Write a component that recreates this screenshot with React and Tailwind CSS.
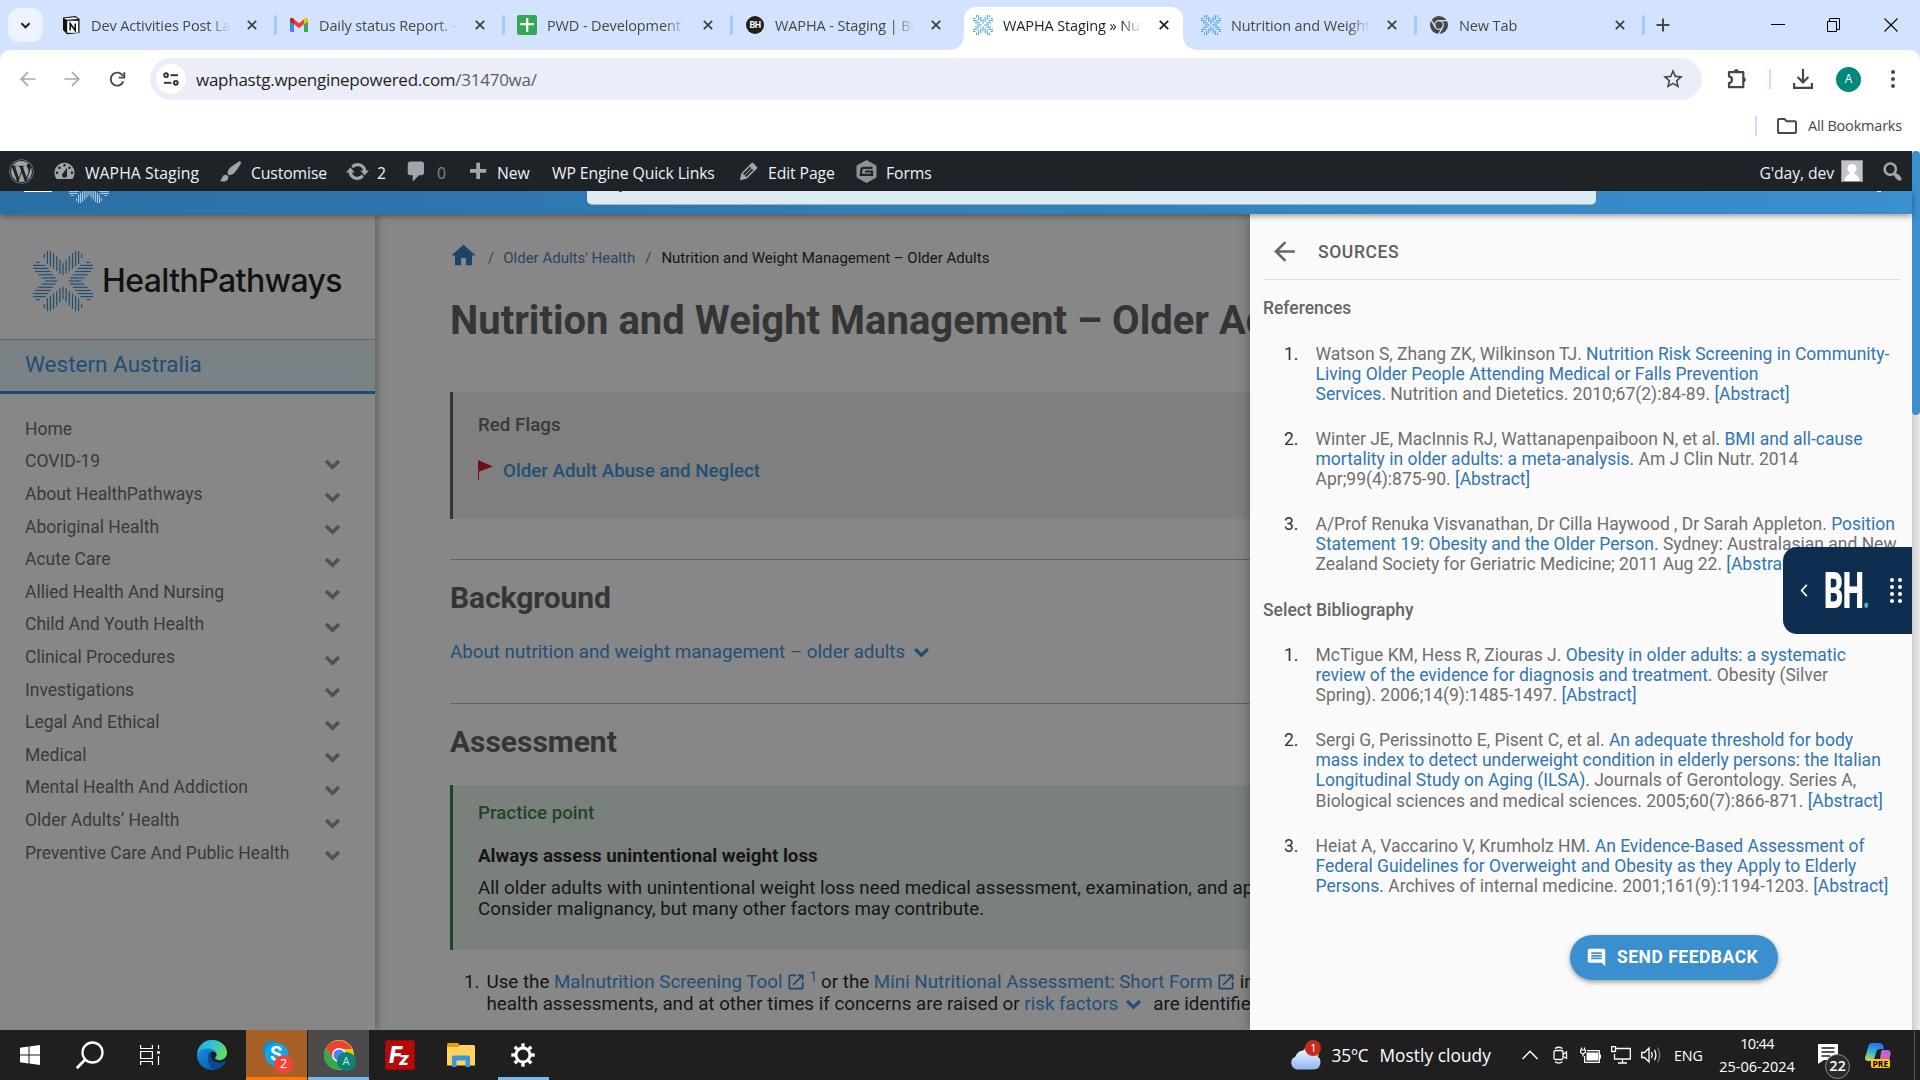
import React from "react";
import { MdHome, MdOpenInNew, MdComment, MdArrowBack, MdStarBorder } from "react-icons/md";
import { FaWordpress } from "react-icons/fa";

const UI = "font-['Open_Sans','Noto_Sans',sans-serif]";

/* ---------- shared icons ---------- */

const BURST_V = [
  [0, 12, 24.3],
  [3.1, 8.7, 22.7],
  [6.3, 5.3, 20],
  [9.5, 2, 17.7],
  [12.6, 0, 15.3],
  [15.6, 0, 12.7],
  [18.6, 3, 6.7],
];

const BURST_FLAT = [
  [0, 12, 26],
  [6.5, 6, 20],
  [13, 0, 14],
  [19.500, 0, 7],
];

function Burst({ className, sw = 1.3, flat = false }) {
  const rows = flat ? BURST_FLAT : BURST_V;
  return (
    <svg viewBox="0 0 60 60" className={className} fill="none" stroke="currentColor" strokeWidth={sw}>
      {[0, 90, 180, 270].map((a) => (
        <g key={a} transform={`rotate(${a} 30 30)`}>
          {rows.map(([dx, a1, b1]) => (
            <g key={dx}>
              <path d={`M${30 - dx} ${a1}V${b1}`} />
              {dx > 0 && <path d={`M${30 + dx} ${a1}V${b1}`} />}
            </g>
          ))}
        </g>
      ))}
    </svg>
  );
}

function Chevron({ className, sw = 4 }) {
  return (
    <svg viewBox="0 0 18 12" className={className} fill="none" stroke="currentColor" strokeWidth={sw}>
      <path d="M2 2.2 9 9 16 2.2" />
    </svg>
  );
}

function Notion() {
  return (
    <svg viewBox="0 0 20 20" className="size-5">
      <path d="M2 2.5 14.5 1 18.5 4V18L6 19.3 2 15Z" fill="#111" />
      <path d="M3 3.3 14.2 2.2 17 4 5.8 4.8Z" fill="#fff" />
      <rect x="6.2" y="5.8" width="11" height="12" fill="#fff" />
      <path d="M9.200 15.500V8.500L14.200 15.500V8.500" stroke="#111" strokeWidth="1.600" fill="none" />
    </svg>
  );
}

function Gmail() {
  return (
    <svg viewBox="0 0 20 20" className="size-5">
      <path d="M1 4.5 5 7.5V17H2.2A1.2 1.2 0 0 1 1 15.800Z" fill="#4285f4" />
      <path d="M15 7.500 19 4.500V15.800A1.200 1.200 0 0 1 17.800 17H15Z" fill="#34a853" />
      <path d="M5 4.300 10 8.200 15 4.300V9.300L10 13.200 5 9.300Z" fill="#ea4335" />
      <path d="M1 4.800C1 3 3 2.200 4.300 3.500L5 4.100V9.300L1 6.400Z" fill="#c5221f" />
      <path d="M19 4.800C19 3 17 2.200 15.700 3.500L15 4.100V9.300L19 6.400Z" fill="#fbbc04" />
    </svg>
  );
}

function Sheets() {
  return (
    <svg viewBox="0 0 20 20" className="size-5">
      <rect width="20" height="20" rx="2" fill="#34a853" />
      <path d="M9 3H11.300V8H17V10.300H11.300V17H9V10.300H3V8H9Z" fill="#fff" />
    </svg>
  );
}

function BhBadge() {
  return (
    <span className="flex size-[18px] items-center justify-center rounded-full bg-[#1f1f1f] font-['Roboto',sans-serif] text-[9px] font-bold leading-none tracking-[-0.5px] text-white">
      BH
    </span>
  );
}

function ChromeMono() {
  return (
    <svg viewBox="0 0 20 20" className="size-5">
      <circle cx="10" cy="10" r="9" fill="#474747" />
      <g stroke="#d3e3fd" strokeWidth="1.300" fill="none">
        <circle cx="10" cy="10" r="4.300" />
        <path d="M10 5.700H18.500M6.300 12.200 2.200 5.200M13.700 12.200 9.500 19.300" />
      </g>
    </svg>
  );
}

/* ---------- browser tabs ---------- */

const TABS = [
  { icon: <Notion />, title: "Dev Activities Post Launch", sep: true },
  { icon: <Gmail />, title: "Daily status Report. - dev", sep: true },
  { icon: <Sheets />, title: "PWD - Development Tasks", sep: true },
  { icon: <BhBadge />, title: "WAPHA - Staging | Bug Herd" },
  { icon: <Burst className="size-5 text-[#4a9fd6]" sw={3.2} flat />, title: "WAPHA Staging » Nutrition", active: true },
  { icon: <Burst className="size-5 text-[#4a9fd6]" sw={3.2} flat />, title: "Nutrition and Weight Man", sep: true },
  { icon: <ChromeMono />, title: "New Tab", sep: true },
];

function Cross({ className }) {
  return (
    <svg viewBox="0 0 10 10" className={className} stroke="currentColor" strokeWidth="1.700" fill="none">
      <path d="M0.800 0.800 9.200 9.200M9.200 0.800 0.800 9.200" />
    </svg>
  );
}

function Tab({ icon, title, active, sep }) {
  return (
    <div className="relative flex h-[50px] w-[228px] shrink-0 items-center pl-[13px]">
      {active && (
        <>
          <div className="absolute bottom-0 left-[4px] top-[7px] w-[219px] rounded-t-[12px] bg-white" />
          <div className="absolute bottom-0 left-[-10px] h-[14px] w-[14px] bg-[radial-gradient(circle_at_0_0,transparent_13.500px,#fff_14px)]" />
          <div className="absolute bottom-0 left-[223px] h-[14px] w-[14px] bg-[radial-gradient(circle_at_100%_0,transparent_13.500px,#fff_14px)]" />
        </>
      )}
      <div className="relative flex w-5 shrink-0 justify-center">{icon}</div>
      <div
        className={`relative ml-[10px] w-[139px] overflow-hidden whitespace-nowrap pt-[2px] text-[14.500px] leading-[24px] tracking-[-0.120px] [mask-image:linear-gradient(to_right,#000_118px,transparent_139px)] ${active ? "text-[#1f1f1f]" : "text-[#474747]"}`}
      >
        {title}
      </div>
      <Cross className={`relative ml-[17px] size-[10px] ${active ? "text-[#1f1f1f]" : "text-[#3c3c3c]"}`} />
      {sep && <div className="absolute right-[-1px] top-[15px] h-5 w-[3px] rounded bg-[#a8c7fa]" />}
    </div>
  );
}

function TabStrip() {
  return (
    <div className="flex h-[50px] items-center bg-[#d3e3fd]">
      <div className="ml-2 flex h-[34px] w-[35px] items-center justify-center rounded-[11px] bg-[#ecf3fe] text-[#1f1f1f]">
        <Chevron className="h-[7px] w-[11px]" sw={3.400} />
      </div>
      <div className="ml-[5px] flex">
        {TABS.map((t, i) => (
          <Tab key={i} {...t} />
        ))}
      </div>
      <svg viewBox="0 0 14 14" className="ml-[12px] size-[14px] text-[#474747]" stroke="currentColor" strokeWidth="2">
        <path d="M7 0.500V13.500M0.500 7H13.500" />
      </svg>
      <div className="ml-auto flex items-center text-black">
        <svg viewBox="0 0 14 14" className="size-[14px]" stroke="currentColor">
          <path d="M0 6.500H14" />
        </svg>
        <svg viewBox="0 0 14 14" className="ml-[41px] size-[14px]" stroke="currentColor" fill="none">
          <path d="M1.500 3.500H10.500V13.500H1.500ZM3.500 3V0.500H13.500V11.500H11" />
        </svg>
        <svg viewBox="0 0 14 14" className="ml-[44px] mr-[22px] size-[14px]" stroke="currentColor" strokeWidth="1.100">
          <path d="M0.500 0.500 13.500 13.500M13.500 0.500 0.500 13.500" />
        </svg>
      </div>
    </div>
  );
}

/* ---------- browser toolbar ---------- */

function NavArrow({ className }) {
  return (
    <svg viewBox="0 0 16 16" className={className} fill="none" stroke="currentColor" strokeWidth="1.700">
      <path d="M15.500 8H1.500M8 1.200 1.300 8 8 14.800" />
    </svg>
  );
}

function Toolbar() {
  return (
    <div className="bg-[#d3e3fd]">
      <div className="h-[101px] rounded-t-[10px] bg-white">
        <div className="flex h-[58px] items-center text-[#474747]">
          <NavArrow className="ml-5 size-4 text-[#a9a9a9]" />
          <NavArrow className="ml-[28px] size-4 rotate-180 text-[#a9a9a9]" />
          <svg viewBox="0 0 18 18" className="ml-[29px] size-[17px]" fill="none" stroke="currentColor" strokeWidth="2">
            <path d="M15.200 11A6.900 6.900 0 1 1 14.800 5.300" />
            <path d="M16.200 1.200V7H10.200" />
          </svg>
          <div className="ml-[24px] flex h-[42px] w-[1552px] items-center rounded-full bg-[#ebeef8]">
            <div className="ml-[6px] flex size-[30px] items-center justify-center rounded-full bg-white">
              <svg viewBox="0 0 16 14" className="h-[14px] w-4" fill="none" stroke="#303030" strokeWidth="1.900">
                <circle cx="3" cy="3.200" r="1.900" />
                <path d="M7.500 3.200H15" />
                <circle cx="12.800" cy="10.800" r="1.900" />
                <path d="M1 10.800H8.500" />
              </svg>
            </div>
            <div className="ml-[10px] pt-px text-[17px] leading-[24px] tracking-[-0.260px] text-[#1f1f1f]">
              waphastg.wpenginepowered.com<span className="text-[#5a5d63]">/31470wa/</span>
            </div>
            <MdStarBorder className="ml-auto mr-[17px] size-6" />
          </div>
          <svg viewBox="0 0 22 22" className="ml-[24px] size-[22px]" fill="none" stroke="currentColor" strokeWidth="2.200" strokeLinejoin="round">
            <path d="M3 4.200H17.300V19.200H3V15C7 14.600 7 8.800 3 8.400Z" />
            <path d="M8.300 3.500A2 2 0 0 1 12.300 3.500ZM18 9.800A2 2 0 0 1 18 13.600Z" fill="currentColor" strokeWidth="1" />
          </svg>
          <div className="ml-[21px] h-[20px] w-[2px] bg-[#c9dcfb]" />
          <svg viewBox="0 0 20 20" className="ml-[22px] size-5" fill="none" stroke="currentColor" strokeWidth="2.200">
            <path d="M10 0V13M4.600 8 10 13.400 15.400 8M1.100 14V18.800H18.900V14" />
          </svg>
          <div className="ml-[23px] flex size-[25px] items-center justify-center rounded-full bg-[#00897b] text-[12px] text-white">A</div>
          <svg viewBox="0 0 4 18" className="ml-[30px] h-[18px] w-1" fill="currentColor">
            <circle cx="2" cy="2" r="2" />
            <circle cx="2" cy="9" r="2" />
            <circle cx="2" cy="16" r="2" />
          </svg>
        </div>
        <div className="flex h-[35px] items-center justify-end pr-[18px] text-[#474747]">
          <div className="h-5 w-[2px] bg-[#c9dcfb]" />
          <svg viewBox="0 0 20 16" className="ml-[20px] h-4 w-5" fill="none" stroke="currentColor" strokeWidth="1.900" strokeLinejoin="round">
            <path d="M1 1.800Q1 1 2 1H7.500L9.500 3.200H18Q19 3.200 19 4.200V14Q19 15 18 15H2Q1 15 1 14Z" />
          </svg>
          <div className="ml-[11px] text-[14.500px] leading-5 tracking-[-0.200px]">All Bookmarks</div>
        </div>
      </div>
    </div>
  );
}

/* ---------- WordPress admin bar ---------- */

const DASH = {
  dashboard:
    "M3.76 16h12.48c1.1-1.37 1.76-3.11 1.76-5 0-4.42-3.58-8-8-8s-8 3.58-8 8c0 1.89.66 3.63 1.76 5zM10 4c.55 0 1 .45 1 1s-.45 1-1 1-1-.45-1-1 .45-1 1-1zM6 6c.55 0 1 .45 1 1s-.45 1-1 1-1-.45-1-1 .45-1 1-1zm8 0c.55 0 1 .45 1 1s-.45 1-1 1-1-.45-1-1 .45-1 1-1zm-5.37 5.55L12 7v6c0 1.1-.9 2-2 2s-2-.9-2-2c0-.57.24-1.08.63-1.45zM4 10c.55 0 1 .45 1 1s-.45 1-1 1-1-.45-1-1 .45-1 1-1zm12 0c.55 0 1 .45 1 1s-.45 1-1 1-1-.45-1-1 .45-1 1-1z",
  brush:
    "M18.33 3.57s.27-.8-.31-1.36c-.53-.52-1.22-.24-1.22-.24-.61.3-5.76 3.47-7.67 5.57-.86.96-2.06 3.79-1.09 4.82.92.98 3.96-.17 4.79-1 2.06-2.06 5.21-7.17 5.5-7.79zM1.4 17.65c2.37-1.56 1.46-3.41 3.23-4.64.93-.65 2.22-.62 3.08.29.63.67.8 2.57-.16 3.46-1.57 1.45-4 1.55-6.15.89z",
  update:
    "M10.2 3.28c3.53 0 6.43 2.61 6.92 6h2.08l-3.5 4-3.5-4h2.32c-.45-1.97-2.21-3.45-4.32-3.45-1.45 0-2.73.71-3.54 1.78L4.95 5.66C6.23 4.2 8.11 3.28 10.2 3.28zm-.4 13.44c-3.52 0-6.43-2.61-6.92-6H.8l3.5-4c1.17 1.33 2.33 2.67 3.5 4H5.48c.45 1.97 2.21 3.45 4.32 3.45 1.45 0 2.73-.71 3.54-1.78l1.71 1.95c-1.28 1.46-3.15 2.38-5.25 2.38z",
  comment: "M5 2h9c1.1 0 2 .9 2 2v7c0 1.1-.9 2-2 2h-2l-5 5v-5H5c-1.1 0-2-.9-2-2V4c0-1.1.9-2 2-2z",
  plus: "M17 8v3h-5v5H9v-5H4V8h5V3h3v5h5z",
  edit:
    "M13.89 3.39l2.71 2.72c.46.46.42 1.24.03 1.64l-8.01 8.02-5.56 1.16 1.16-5.58s7.6-7.63 7.99-8.03c.39-.39 1.22-.39 1.68.07zm-2.73 2.79l-5.59 5.61 1.11 1.11 5.54-5.65zm-2.97 8.23l5.58-5.6-1.07-1.08-5.59 5.6z",
  search:
    "M12.14 4.18c1.87 1.87 2.11 4.75.72 6.89.12.1.22.21.36.31.2.16.47.36.81.59.34.24.56.39.66.47.42.31.73.57.94.78.32.32.6.65.84 1 .25.35.44.69.59 1.04.14.35.21.68.18 1-.02.32-.14.59-.36.81s-.49.34-.81.36c-.31.02-.65-.04-.99-.19-.35-.14-.7-.34-1.04-.59-.35-.24-.68-.52-1-.84-.21-.21-.47-.52-.77-.93-.1-.13-.25-.35-.47-.66-.22-.32-.4-.57-.56-.78-.16-.2-.29-.35-.44-.5-2.07 1.09-4.69.76-6.44-.98-2.14-2.15-2.14-5.64 0-7.78 2.15-2.15 5.63-2.15 7.78 0zm-1.41 6.36c1.36-1.37 1.36-3.58 0-4.95-1.37-1.37-3.59-1.37-4.95 0-1.37 1.37-1.37 3.58 0 4.95 1.36 1.37 3.58 1.37 4.95 0z",
};

function Dashicon({ name }) {
  return (
    <svg viewBox="0 0 20 20" className="size-[25px] shrink-0" fill="#a0a5aa" fillRule="evenodd">
      <path d={DASH[name]} />
    </svg>
  );
}

function BarItem({ icon, w, gap = "gap-2", children, dim }) {
  return (
    <div className={`flex shrink-0 items-center whitespace-nowrap ${w} ${gap}`}>
      {icon}
      <span className={`pt-[3px] ${dim ? "text-[#83878b]" : ""}`}>{children}</span>
    </div>
  );
}

function AdminBar() {
  return (
    <div className="flex h-10 items-center bg-[#1d2327] text-[15.750px] leading-[24px] tracking-[-0.110px] text-[#f0f0f1]">
      <div className="flex w-[52px] shrink-0 items-center pl-[9px]">
        <FaWordpress className="size-[25px] text-[#a0a5aa]" />
      </div>
      <BarItem w="w-[166px] tracking-[0.050px]" icon={<Dashicon name="dashboard" />}>WAPHA Staging</BarItem>
      <BarItem w="w-[127px]" icon={<Dashicon name="brush" />}>Customise</BarItem>
      <BarItem w="w-[59px]" gap="gap-[7px]" icon={<Dashicon name="update" />}>2</BarItem>
      <BarItem w="w-[61px]" icon={<Dashicon name="comment" />} dim>0</BarItem>
      <BarItem w="w-[87px]" gap="gap-[7px]" icon={<Dashicon name="plus" />}>New</BarItem>
      <BarItem w="w-[184px]">WP Engine Quick Links</BarItem>
      <BarItem w="w-[118px]" gap="gap-[7px]" icon={<Dashicon name="edit" />}>Edit Page</BarItem>
      <BarItem
        w="w-[90px]"
        gap="gap-[7px]"
        icon={
          <svg viewBox="0 0 25 25" className="size-[25px]">
            <path d="M12.500 1 21.500 6Q22.500 6.500 22.500 8V17Q22.500 18.500 21.500 19L12.500 24 3.500 19Q2.500 18.500 2.500 17V8Q2.500 6.500 3.500 6Z" fill="#8f9194" />
            <path d="M18.500 8.800H9.500Q7.600 8.800 7.300 10.800L6.800 15.800H18V12.500H11" fill="none" stroke="#1d2327" strokeWidth="2.200" />
          </svg>
        }
      >
        Forms
      </BarItem>
      <div className="ml-auto flex items-center pr-[7px]">
        <span className="pt-[3px]">G'day, dev</span>
        <svg viewBox="0 0 22 22" className="ml-[7px] size-[22px]">
          <rect width="22" height="22" fill="#8c8f94" />
          <rect x="1" y="1" width="20" height="20" fill="#c3c4c7" />
          <circle cx="11" cy="8.500" r="4.500" fill="#fff" />
          <path d="M3.500 21Q4 15.500 8 14.500L9 12H13L14 14.500Q18 15.500 18.500 21Z" fill="#fff" />
        </svg>
        <span className="ml-[17px]"><Dashicon name="search" /></span>
      </div>
    </div>
  );
}

/* ---------- site header remnant ---------- */

function SiteHeader() {
  return (
    <div className="relative z-10 flex h-[23px] items-start bg-linear-to-r from-[#2a6fa4] to-[#3a8fce] shadow-[0_2px_6px_rgba(0,0,0,0.400)]">
      <div className="ml-6 h-px w-7 bg-white" />
      <div className="ml-[17px] h-3 w-10 overflow-hidden">
        <Burst className="mt-[-28px] size-10 text-[#b9d6ec]" sw={1.500} />
      </div>
      <div className="ml-[478px] h-[14px] w-[1009px] rounded-b-[5px] border-b border-[#9db4c4] bg-[#dfebf4] pl-[32px]">
        <div className="h-px w-[3px] bg-[#555]" />
      </div>
      <div className="ml-[281px] h-px w-1 bg-white" />
    </div>
  );
}

/* ---------- sidebar ---------- */

const MENU = [
  "Home",
  "COVID-19",
  "About HealthPathways",
  "Aboriginal Health",
  "Acute Care",
  "Allied Health And Nursing",
  "Child And Youth Health",
  "Clinical Procedures",
  "Investigations",
  "Legal And Ethical",
  "Medical",
  "Mental Health And Addiction",
  "Older Adults’ Health",
  "Preventive Care And Public Health",
];

function Sidebar() {
  return (
    <div className="relative w-[375px] shrink-0 bg-[#878787] shadow-[2px_0_8px_rgba(0,0,0,0.300)]">
      <div className="flex h-[126px] items-start border-b border-[#626969]">
        <Burst className="ml-[33px] mt-[37px] size-[60px] text-[#1f4f75]" sw={1.200} />
        <div className="ml-[9px] mt-[47px] font-['Inter',sans-serif] text-[32px] font-medium leading-[40px] tracking-[-0.600px] text-[#121212]">HealthPathways</div>
      </div>
      <div className="flex h-[54px] items-center border-b-[3px] border-[#1f4c70] bg-[#7a8285] pb-[2px] pl-[25px] text-[22.500px] text-[#214e74]">Western Australia</div>
      <div className="mt-[18.700px]">
        {MENU.map((m, i) => (
          <div key={m} className="flex h-[32.600px] items-center justify-between pl-[25px] pr-[34px] text-[17.500px] text-[#3a3a3a]">
            {m}
            {i > 0 && <Chevron className="mt-[6px] h-[11px] w-[17px] text-[#515151]" />}
          </div>
        ))}
      </div>
    </div>
  );
}

/* ---------- article ---------- */

const dimLink = "text-[#234f75]";

function Article() {
  return (
    <div className="min-w-0 flex-1 overflow-hidden whitespace-nowrap pl-[75px] text-[18.750px] text-[#151515]">
      <div className="mt-8 flex h-6 items-center text-[15px]">
        <MdHome className="-ml-[1px] mt-[-6px] size-[29px] text-[#1a4468]" />
        <span className="ml-[10px] text-[#444]">/</span>
        <span className="ml-[9px] text-[#27455f]">Older Adults' Health</span>
        <span className="ml-[10px] text-[#444]">/</span>
        <span className="ml-[10px]">Nutrition and Weight Management – Older Adults</span>
      </div>
      <h1 className="mt-[26px] h-[49px] text-[40px] font-bold leading-[50px] text-[#353535]">Nutrition and Weight Management – Older Adults</h1>
      <div className="mt-[47px] h-[127px] border-l-[3px] border-[#353535] bg-[#7f7f7f] pl-[25px] pt-[21px] font-medium leading-6">
        <div className="text-[#393939]">Red Flags</div>
        <div className="mt-[22px] flex items-center">
          <svg viewBox="0 0 15 20" className="mb-[2px] h-5 w-[15px]" fill="#6b1019">
            <path d="M0 0 15 6.500 1 11.500V20H0Z" />
          </svg>
          <span className={`ml-[10px] ${dimLink}`}>Older Adult Abuse and Neglect</span>
        </div>
      </div>
      <div className="mt-10 h-px bg-[#626262]" />
      <h2 className="mt-5 text-[30px] font-bold leading-9 tracking-[-0.080px] text-[#353535]">Background</h2>
      <div className={`mt-6 flex h-6 items-center ${dimLink}`}>
        About nutrition and weight management – older adults
        <Chevron className="ml-[8px] h-[11px] w-[17px]" sw={3.500} />
      </div>
      <div className="mt-[39px] h-px bg-[#626262]" />
      <h2 className="mt-[20px] text-[30px] font-bold leading-9 tracking-[-0.040px] text-[#353535]">Assessment</h2>
      <div className="mt-[25px] h-[165px] border-l-[3px] border-[#1c4424] bg-[#7a807b] pl-[25px] pt-4">
        <div className="font-medium leading-6 text-[#1e4626]">Practice point</div>
        <div className="mt-[19px] font-bold leading-6">Always assess unintentional weight loss</div>
        <div className="mt-[10px] leading-[21.200px]">
          All older adults with unintentional weight loss need medical assessment, examination, and appropriate
          <br />
          Consider malignancy, but many other factors may contribute.
        </div>
      </div>
      <div className="mt-[21px] flex pl-[14px]">
        <div className="w-[22.500px] shrink-0 leading-[22px]">1.</div>
        <div className="leading-[22px]">
          <div className="flex h-[22px] items-center">
            Use the&nbsp;<span className={dimLink}>Malnutrition Screening Tool</span>
            <MdOpenInNew className="ml-[3px] size-[20px] text-[#1d486c]" />
            <span className={`mb-[10px] ml-[4px] mr-[-1px] text-[14px] ${dimLink}`}>1</span>&nbsp;or the&nbsp;
            <span className={dimLink}>Mini Nutritional Assessment: Short Form</span>
            <MdOpenInNew className="ml-[3px] size-[20px] text-[#1d486c]" />
            <span className="ml-[4px]">in routine</span>
          </div>
          <div className="flex h-[22px] items-center">
            health assessments, and at other times if concerns are raised or&nbsp;<span className={dimLink}>risk factors</span>
            <Chevron className={`ml-[7px] h-[11px] w-[17px] ${dimLink}`} sw={3.500} />
            <span className="ml-[11px]">are identified.</span>
          </div>
        </div>
      </div>
    </div>
  );
}

/* ---------- sources panel ---------- */

const L = ({ children }) => <span className="text-[#3276b1]">{children}</span>;
const Abstract = () => <L>[Abstract]</L>;

const REFERENCES = [
  [
    <>Watson S, Zhang ZK, Wilkinson TJ. <L>Nutrition Risk Screening in Community-</L></>,
    <L>Living Older People Attending Medical or Falls Prevention</L>,
    <><L>Services.</L> Nutrition and Dietetics. 2010;67(2):84-89. <Abstract /></>,
  ],
  [
    <>Winter JE, MacInnis RJ, Wattanapenpaiboon N, et al. <L>BMI and all-cause</L></>,
    <><L>mortality in older adults: a meta-analysis.</L> Am J Clin Nutr. 2014</>,
    <>Apr;99(4):875-90. <Abstract /></>,
  ],
  [
    <>A/Prof Renuka Visvanathan, Dr Cilla Haywood , Dr Sarah Appleton. <L>Position</L></>,
    <><L>Statement 19: Obesity and the Older Person.</L> Sydney: Australasian and New</>,
    <>Zealand Society for Geriatric Medicine; 2011 Aug 22. <Abstract /></>,
  ],
];

const BIBLIOGRAPHY = [
  [
    <>McTigue KM, Hess R, Ziouras J. <L>Obesity in older adults: a systematic</L></>,
    <><L>review of the evidence for diagnosis and treatment.</L> Obesity (Silver</>,
    <>Spring). 2006;14(9):1485-1497. <Abstract /></>,
  ],
  [
    <>Sergi G, Perissinotto E, Pisent C, et al. <L>An adequate threshold for body</L></>,
    <L>mass index to detect underweight condition in elderly persons: the Italian</L>,
    <><L>Longitudinal Study on Aging (ILSA).</L> Journals of Gerontology. Series A,</>,
    <>Biological sciences and medical sciences. 2005;60(7):866-871. <Abstract /></>,
  ],
  [
    <>Heiat A, Vaccarino V, Krumholz HM. <L>An Evidence-Based Assessment of</L></>,
    <L>Federal Guidelines for Overweight and Obesity as they Apply to Elderly</L>,
    <><L>Persons.</L> Archives of internal medicine. 2001;161(9):1194-1203. <Abstract /></>,
  ],
];

function SourceList({ items, top }) {
  return (
    <ol className={`flex flex-col gap-[25px] ${top}`}>
      {items.map((lines, i) => (
        <li key={i} className="flex pl-[21px] leading-[20.100px]">
          <div className="w-[31.500px] shrink-0 text-[#333]">{i + 1}.</div>
          <div>
            {lines.map((l, j) => (
              <div key={j}>{l}</div>
            ))}
          </div>
        </li>
      ))}
    </ol>
  );
}

function SourcesPanel() {
  return (
    <div className="relative flex w-[662px] shrink-0 flex-col whitespace-nowrap bg-[#fafafa] pl-[13px] pr-[12px] text-[17.500px] tracking-[-0.010px] text-[#6f6f6f] shadow-[0_0_12px_rgba(0,0,0,0.350)]">
      <div className="flex h-[66px] items-center border-b border-[#dedede] pt-[9px]">
        <MdArrowBack className="ml-[6px] mr-[18px] size-[31px] text-[#666]" />
        <span className="pt-[2px] font-medium tracking-[0.600px] text-[#606060]">SOURCES</span>
      </div>
      <div className="mt-4 font-medium leading-6 text-[#666]">References</div>
      <SourceList items={REFERENCES} top="mt-[23.600px]" />
      <div className="mt-[23.500px] font-medium leading-6 text-[#666]">Select Bibliography</div>
      <SourceList items={BIBLIOGRAPHY} top="mt-[23px]" />
      <div className="ml-[307px] mt-[39px] flex h-[45px] w-[208px] items-center rounded-full bg-[#3a8fce] pl-[16px] text-white shadow-[0_2px_5px_rgba(0,0,0,0.400)]">
        <MdComment className="size-[21px]" />
        <span className="ml-[10px] font-bold tracking-[0.500px]">SEND FEEDBACK</span>
      </div>
      <div className="absolute right-0 top-[333px] flex h-[87px] w-[129px] items-center rounded-l-[14px] bg-[#0e2e50] text-white">
        <svg viewBox="0 0 8 14" className="ml-[17px] h-[13px] w-[8px]" fill="none" stroke="currentColor" strokeWidth="1.800">
          <path d="M7 1 1.500 7 7 13" />
        </svg>
        <div className="ml-[16px] h-[50px] w-[46px] shrink-0">
          <div className="flex w-[80px] origin-left scale-x-[0.600] items-baseline text-[50px] font-black leading-[50px] tracking-[-1px]">
            BH<span className="text-[34px] text-[#5aa9dc]">.</span>
          </div>
        </div>
        <div className="ml-[20px] grid grid-cols-2 gap-x-[4px] gap-y-[2.700px]">
          {Array.from({ length: 8 }, (_, i) => (
            <div key={i} className="size-[4px] rounded-full bg-white" />
          ))}
        </div>
      </div>
    </div>
  );
}

/* ---------- taskbar ---------- */

function Edge() {
  return (
    <svg viewBox="0 0 30 30" className="size-[30px]">
      <defs>
        <linearGradient id="edgeTop" x1="0" y1="0.300" x2="1" y2="0.600">
          <stop offset="0" stopColor="#2aa9e8" />
          <stop offset="0.500" stopColor="#35c4d0" />
          <stop offset="1" stopColor="#63e04f" />
        </linearGradient>
        <linearGradient id="edgeLeft" x1="0" y1="0" x2="0.600" y2="1">
          <stop offset="0" stopColor="#1b9de2" />
          <stop offset="1" stopColor="#0b5bb5" />
        </linearGradient>
      </defs>
      <circle cx="15" cy="15" r="15" fill="url(#edgeLeft)" />
      <path d="M0.500 12C2 4.500 8 0 15 0 23.500 0 30 6 30 12.500 30 17.500 26 20 22.500 20 19.500 20 18 19 18 18 18 17 19.500 16.500 19.500 14.500 19.500 11 15.500 8.500 11 8.500 6 8.500 2 10 0.500 14Z" fill="url(#edgeTop)" />
      <path d="M11 17C11 13.500 13 12 14.500 11.700 12.500 14.500 14 22 21.500 22.700 24.500 23 26.500 22 27.600 21.500 26 25.500 21.500 29 16.500 29.500 12.500 27 11 22 11 17Z" fill="#0c4a8f" />
      <path d="M18 18C18 17 19.500 16.500 19.500 14.500 19.500 12.500 17.500 11.500 14.500 11.700 12.500 14.500 14 22 21.500 22.700 24.500 23 26.500 22 27.600 21.500L30 20V15C28.500 19 25 20.300 22.500 20.200 19.500 20 18 19 18 18Z" fill="#1f1f1f" />
    </svg>
  );
}

function Skype() {
  return (
    <div className="relative mb-[2px]">
      <svg viewBox="0 0 27 27" className="size-[27px]">
        <circle cx="8.500" cy="8.500" r="8.500" fill="#0a8fe0" />
        <circle cx="18.500" cy="18.500" r="8.500" fill="#0a7fd0" />
        <circle cx="13.500" cy="13.500" r="11.500" fill="#12a5ea" />
      </svg>
      <span className="absolute left-[7px] top-[1px] font-['Roboto',sans-serif] text-[20px] font-bold leading-[24px] text-white">S</span>
      <span className="absolute left-[11px] top-[14px] flex size-[19px] items-center justify-center rounded-full bg-[#f04438] text-[13px] text-white">2</span>
    </div>
  );
}

function Chrome() {
  return (
    <div className="relative">
      <svg viewBox="0 0 30 30" className="size-[30px]">
        <circle cx="15" cy="15" r="15" fill="#fbc116" />
        <path d="M2 7.500A15 15 0 0 0 15 30L21.500 18.800 15 22.500 8.500 18.700Z" fill="#34a853" />
        <path d="M2 7.500 8.500 18.700 12 9H28A15 15 0 0 0 2 7.500Z" fill="#ea4335" />
        <circle cx="15" cy="15" r="7" fill="#fff" />
        <circle cx="15" cy="15" r="5.600" fill="#4285f4" />
      </svg>
      <span className="absolute left-[13px] top-[12px] flex size-[19px] items-center justify-center rounded-full bg-[#0b8474] text-[11px] text-[#c9e6e2]">A</span>
    </div>
  );
}

function Tile({ w, bg = "", bar, children }) {
  return (
    <div className={`relative flex h-[50px] shrink-0 items-center justify-center ${w} ${bg}`}>
      {children}
      {bar && <div className={`absolute inset-x-0 bottom-0 h-[3px] ${bar}`} />}
    </div>
  );
}

const TEETH = [0, 45, 90, 135, 180, 225, 270, 315];

function Taskbar() {
  return (
    <div className="flex h-[50px] items-center bg-[#1f1f1f] text-white">
      <Tile w="w-[60px]">
        <svg viewBox="0 0 20 20" className="size-5" fill="#fff">
          <path d="M0 2.800 8.500 1.600V9.500H0ZM9.500 1.400 20 0V9.500H9.500ZM0 10.500H8.500V18.400L0 17.200ZM9.500 10.500H20V20L9.500 18.600Z" />
        </svg>
      </Tile>
      <Tile w="w-[60px]">
        <svg viewBox="0 0 28 28" className="size-7" fill="none" stroke="#fff" strokeWidth="2.300">
          <circle cx="16.500" cy="11.500" r="10" />
          <path d="M9.300 18.600 0.800 27.200" strokeWidth="2.800" />
        </svg>
      </Tile>
      <Tile w="w-[60px]">
        <svg viewBox="0 0 20 20" className="size-5" fill="none" stroke="#fff" strokeWidth="1.200">
          <path d="M0.600 0V3.500H12.400V0M0.600 20V16.500H12.400V20M0.600 6.500H12.400V13.500H0.600ZM18.500 0V4M18.500 11V20" />
          <rect x="17.200" y="6.200" width="2.600" height="2.600" fill="#fff" stroke="none" />
        </svg>
      </Tile>
      <Tile w="w-[66px]"><div className="mr-[2px]"><Edge /></div></Tile>
      <Tile w="w-[61px]" bg="bg-[#a66028]" bar="bg-[#ff7800]"><Skype /></Tile>
      <Tile w="ml-px w-[61px]" bg="bg-[#4b4b4b]" bar="bg-[#76b9ed]"><Chrome /></Tile>
      <Tile w="w-[62px]">
        <div className="flex size-[30px] items-center justify-center border border-dashed border-[#7d0b0b] bg-[#b50a0a] pr-[2px] font-['Roboto',sans-serif] text-[23px] font-black italic leading-none">
          F<span className="ml-[-2px] mt-[6px] text-[19px]">z</span>
        </div>
      </Tile>
      <Tile w="w-[60px]">
        <svg viewBox="0 0 28 24" className="h-6 w-7">
          <path d="M0 1.500Q0 0 1.500 0H11L13 2.500V6H0Z" fill="#e3a008" />
          <path d="M0 4H11L13 2H26.500Q28 2 28 3.500V22.500H0Z" fill="#ffd35c" />
          <path d="M5 24V14.500Q5 12.500 7 12.500H21Q23 12.500 23 14.500V24H18.500V17.500H9.500V24Z" fill="#3b96dd" />
        </svg>
      </Tile>
      <Tile w="ml-[7px] w-[51px]" bar="bg-[#76b9ed]">
        <svg viewBox="0 0 24 24" className="mr-[1px] size-6" fill="none" stroke="#fff">
          <circle cx="12" cy="12" r="7" strokeWidth="3" />
          {TEETH.map((a) => (
            <path key={a} d="M12 0.300V4" strokeWidth="3.400" transform={`rotate(${a} 12 12)`} />
          ))}
        </svg>
      </Tile>

      <div className="ml-auto flex h-full items-center">
        <div className="relative">
          <svg viewBox="0 0 31 30" className="h-[30px] w-[31px]">
            <defs>
              <linearGradient id="cloud" x1="0" y1="0" x2="0" y2="1">
                <stop offset="0" stopColor="#e8f1ff" />
                <stop offset="1" stopColor="#8fb4f0" />
              </linearGradient>
            </defs>
            <circle cx="21" cy="13" r="8" fill="#f5a524" />
            <path d="M7 29.500A6.800 6.800 0 0 1 5.500 16.500 8.500 8.500 0 0 1 21 14.500Q30.500 15 30.500 22 30.500 29.500 23 29.500Z" fill="url(#cloud)" />
          </svg>
          <span className="absolute left-[15px] top-0 flex size-[16px] items-center justify-center rounded-full bg-[#c42b1c] text-[11px]">1</span>
        </div>
        <span className="ml-[10px] pt-[2px] text-[17.300px]">35ºC</span>
        <span className="ml-[11px] pt-[2px] text-[17.300px] tracking-[0.050px]">Mostly cloudy</span>
        <svg viewBox="0 0 16 10" className="ml-[31px] h-[10px] w-4" fill="none" stroke="#fff" strokeWidth="1.400">
          <path d="M0.500 9 8 1.200 15.500 9" />
        </svg>
        <svg viewBox="0 0 15 18" className="ml-[15px] h-[18px] w-[15px]" fill="none" stroke="#fff" strokeWidth="1.300">
          <rect x="1" y="4.500" width="9" height="9" rx="1.500" />
          <path d="M10 8.500 13.500 6V12.500L10 10.500M2 2.500Q5.500 0 9.500 2.500M2 15.800Q5.500 18.300 9.500 15.800" />
        </svg>
        <svg viewBox="0 0 21 16" className="ml-[12px] h-4 w-[21px]" fill="none" stroke="#fff" strokeWidth="1.200">
          <rect x="6.500" y="5.500" width="12" height="8" fill="#fff" stroke="none" />
          <path d="M7 3.600H19.400V15.400H4.600V9M20.500 7.500V11.500M1.500 0.500V3M4.500 0.500V3M0.600 3H5.400V5.500L3 7 0.600 5.500ZM3 7V9.500" />
        </svg>
        <svg viewBox="0 0 20 18" className="ml-[10px] h-[18px] w-5" fill="none" stroke="#fff" strokeWidth="1.300">
          <path d="M5 2.500H19.300V13H3.500V8M11.500 13V17M7 17H16M0.600 0.600H4.500V5.500L0.600 5.500Z" />
        </svg>
        <svg viewBox="0 0 21 18" className="ml-[10px] h-[18px] w-[21px]" fill="none" stroke="#fff" strokeWidth="1.300">
          <path d="M0.700 6.500H3.500L8 2V16L3.500 11.500H0.700ZM10.500 6Q12 9 10.500 12M13.500 3.800Q16.300 9 13.500 14.200" />
          <path d="M16.500 1.500Q21 9 16.500 16.500" stroke="#777" />
        </svg>
        <span className="ml-[12px] pt-px text-[14.300px]">ENG</span>
        <div className="ml-[13px] flex w-[82px] flex-col items-center text-[14.500px] leading-[23px]">
          <span className="tracking-[-0.700px]">10:44</span>
          <span>25-06-2024</span>
        </div>
        <div className="relative ml-[20px] mb-[3px]">
          <svg viewBox="0 0 20 20" className="size-5">
            <path d="M0 0H20V16H6L0 20Z" fill="#fff" />
            <path d="M3.500 4H16.500M3.500 8H16.500M3.500 12H12" stroke="#1f1f1f" strokeWidth="1.300" />
          </svg>
          <span className="absolute left-[7px] top-[10px] flex size-[25px] items-center justify-center rounded-full border border-[#8a8a8a] bg-[#2b2b2b] text-[14.500px] font-semibold">22</span>
        </div>
        <div className="relative ml-[27px] mr-[23px] h-[25px] w-[26px]">
          <svg viewBox="0 0 26 25" className="h-[25px] w-[26px]">
            <defs>
              <linearGradient id="cpA" x1="0.500" y1="0" x2="0.200" y2="1">
                <stop offset="0" stopColor="#2a6fe8" />
                <stop offset="0.500" stopColor="#2bb6d6" />
                <stop offset="1" stopColor="#d6d94a" />
              </linearGradient>
              <linearGradient id="cpB" x1="0.700" y1="0" x2="0.300" y2="1">
                <stop offset="0" stopColor="#a56af0" />
                <stop offset="0.500" stopColor="#e85bb0" />
                <stop offset="1" stopColor="#ff8a4c" />
              </linearGradient>
            </defs>
            <path d="M7 0H14.500Q18 0 18.500 4L19 6H15Q12 6 11 10L9.500 15Q8.500 18 5 18H3Q-0.500 18 0.300 14L3.500 3Q4.500 0 7 0Z" fill="url(#cpA)" />
            <path d="M17 7H22Q26 7 25.600 11L23.500 20Q23 23 19 23H11Q14 22 14.500 19L16 9Z" fill="url(#cpB)" />
          </svg>
          <span className="absolute left-[6px] top-[16px] rounded-[2px] bg-[#ffc61a] px-[1.500px] text-[8.500px] font-bold leading-[9px] text-black">PRE</span>
        </div>
        <div className="mr-[5px] h-full w-px bg-[#555]" />
      </div>
    </div>
  );
}

export default function App() {
  return (
    <div className={`flex h-[1080px] w-[1920px] flex-col overflow-hidden bg-white ${UI}`}>
      <TabStrip />
      <Toolbar />
      <div className="flex h-[879px]">
        <div className="flex w-[1912px] flex-col">
          <AdminBar />
          <div className="flex min-h-0 flex-1 flex-col font-['Roboto',sans-serif]">
            <SiteHeader />
            <div className="flex min-h-0 flex-1 overflow-hidden bg-[#878787]">
              <Sidebar />
              <Article />
              <SourcesPanel />
            </div>
          </div>
        </div>
        <div className="w-2 bg-linear-to-r from-[#cfcfcf] to-[#ececec]">
          <div className="h-[264px] rounded-full bg-[#3a8fce]" />
        </div>
      </div>
      <Taskbar />
    </div>
  );
}
